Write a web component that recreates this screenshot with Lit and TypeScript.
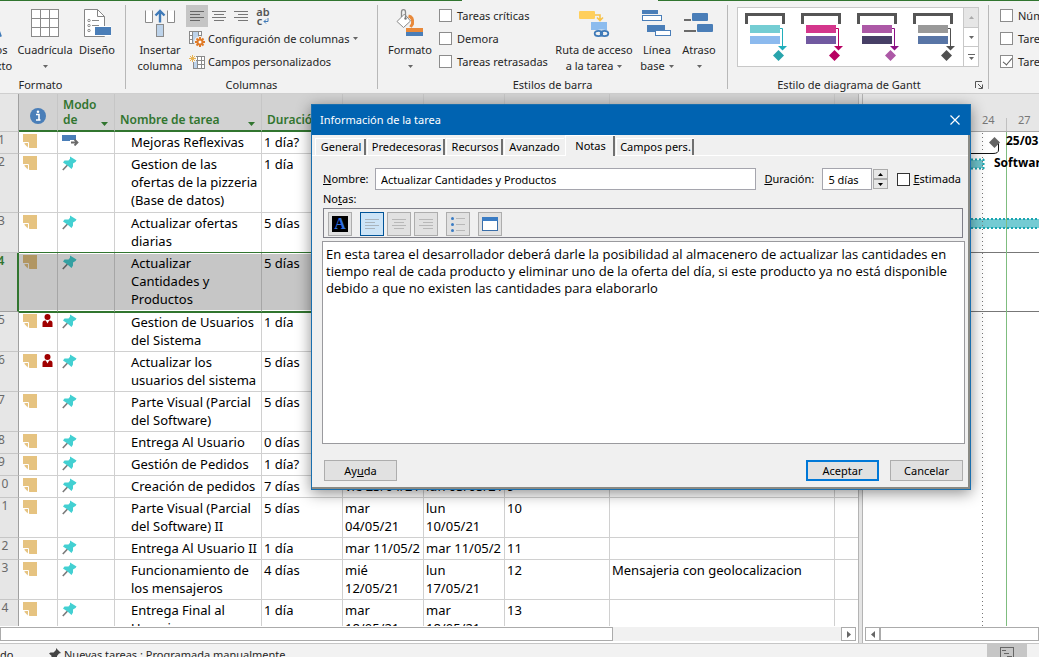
import { LitElement, html, svg, css, nothing, TemplateResult } from "lit";
import { customElement } from "lit/decorators.js";
import { classMap } from "lit/directives/class-map.js";

interface Task {
  n: number;
  name: string[];
  dur: string;
  start?: string[];
  end?: string[];
  pred?: string;
  res?: string;
  person?: boolean;
  auto?: boolean;
  selected?: boolean;
}

const TASKS: Task[] = [
  { n: 1, name: ["Mejoras Reflexivas"], dur: "1 día?", auto: true },
  { n: 2, name: ["Gestion de las", "ofertas de la pizzeria", "(Base de datos)"], dur: "1 día" },
  { n: 3, name: ["Actualizar ofertas", "diarias"], dur: "5 días" },
  { n: 4, name: ["Actualizar", "Cantidades y", "Productos"], dur: "5 días", selected: true },
  { n: 5, name: ["Gestion de Usuarios", "del Sistema"], dur: "1 día", person: true },
  { n: 6, name: ["Actualizar los", "usuarios del sistema"], dur: "5 días", person: true },
  { n: 7, name: ["Parte Visual (Parcial", "del Software)"], dur: "5 días" },
  { n: 8, name: ["Entrega Al Usuario"], dur: "0 días" },
  { n: 9, name: ["Gestión de Pedidos"], dur: "1 día?" },
  { n: 10, name: ["Creación de pedidos"], dur: "7 días", start: ["vie 23/04/21"], end: ["lun 03/05/21"], pred: "9" },
  { n: 11, name: ["Parte Visual (Parcial", "del Software) II"], dur: "5 días", start: ["mar", "04/05/21"], end: ["lun", "10/05/21"], pred: "10" },
  { n: 12, name: ["Entrega Al Usuario II"], dur: "1 día", start: ["mar 11/05/21"], end: ["mar 11/05/21"], pred: "11" },
  { n: 13, name: ["Funcionamiento de", "los mensajeros"], dur: "4 días", start: ["mié", "12/05/21"], end: ["lun", "17/05/21"], pred: "12", res: "Mensajeria con geolocalizacion" },
  { n: 14, name: ["Entrega Final al", "Usuario"], dur: "1 día", start: ["mar", "18/05/21"], end: ["mar", "18/05/21"], pred: "13" },
];

const lines = (parts?: string[]) =>
  parts ? parts.map((p, i) => (i ? html`<br>${p}` : p)) : nothing;

const icon = (w: number, h: number, body: TemplateResult | TemplateResult[]) =>
  html`<svg class="ico" width=${w} height=${h} viewBox="0 0 ${w} ${h}" fill="none" aria-hidden="true">${body}</svg>`;

const caret = () => icon(5, 3, svg`<path d="M0 0h5L2.500 3z" fill="#666"/>`);

const pin = () =>
  icon(15, 15, svg`<path d="M5.500 9L0.800 14" stroke="#7a7a7a" stroke-width="1.600"/><path d="M8 .5L14.500 4.500L13.500 6L11 7.500V10.500L9.500 13L5.500 9.500L1 6.500L2.500 4.500L6.500 4.500L8 2.800Z" fill="#43d0d2"/>`);
const note = () =>
  icon(14, 14, svg`<path d="M0 0H14V14H6.500L0 7.500Z" fill="#e6c380"/><path d="M0 8.500H5.500V14" stroke="#fff"/><path d="M1 9.500H4.800V13.500Z" fill="#e6c380"/>`);
const person = () =>
  icon(11, 13, svg`<circle cx="5.500" cy="3" r="3" fill="#a00000"/><path d="M0.500 13V9Q0.500 6.500 3 6.500H3.800L5.500 9.500L7.200 6.500H8Q10.500 6.500 10.500 9V13Z" fill="#a00000"/>`);
const auto = () =>
  icon(17, 12, svg`<rect y="1" width="14" height="6" fill="#4a7eb8"/><path d="M8 6h6v5h-6z" fill="#fff"/><path d="M9 8.500H15M12.500 5.500L15.500 8.500L12.500 11.500" stroke="#6a6a6a" stroke-width="1.800"/>`);

const alignLines = (kind: "l" | "c" | "r", w: number, color: string, step: number) => {
  const short = Math.round(w * 0.68);
  const x = kind === "l" ? 0 : kind === "c" ? Math.round((w - short) / 2) : w - short;
  return icon(w, step * 3 + 1, svg`${[0, 1, 2, 3].map(
    (i) => svg`<rect x=${i % 2 ? x : 0} y=${i * step} width=${i % 2 ? short : w} height="1" fill=${color}/>`,
  )}`);
};

const icons = {
  letter: () => icon(28, 30, svg`<path d="M5 29L14 4L23 29M8 21H20" stroke="#3f7ab8" stroke-width="4"/>`),
  grid: () => icon(28, 28, svg`<rect x=".5" y=".5" width="27" height="27" fill="#fff" stroke="#8a8a8a"/><path d="M9.500 0V28M18.500 0V28M0 9.500H28M0 18.500H28" stroke="#8a8a8a"/>`),
  design: () => icon(28, 28, svg`<path d="M1.500 .5H14.500L21.500 7.500V27.500H1.500Z" fill="#fff" stroke="#858585"/><path d="M14.500 .5V7.500H21.500" stroke="#858585"/><circle cx="6" cy="11.500" r="1.200" stroke="#8a8a8a"/><circle cx="6" cy="16.500" r="1.200" stroke="#8a8a8a"/><circle cx="6" cy="21.500" r="1.200" stroke="#8a8a8a"/><path d="M9 11.500H16M9 16.500H16" stroke="#8a8a8a"/><rect x="11" y="17" width="17" height="10" fill="#fff"/><rect x="12" y="18" width="16" height="8" fill="#4a7eb8"/>`),
  insert: () => icon(30, 28, svg`<path d="M.5 1.500V13.500H7.500V1.500M22.500 1.500V13.500H29.500V1.500" fill="#fff" stroke="#8a8a8a"/><rect x="11.500" y="15.500" width="7" height="12" fill="#bdd3ea" stroke="#8a8a8a"/><path d="M15 13.500V2M10.500 6.500L15 2L19.500 6.500" stroke="#3f7ab8" stroke-width="2.400"/>`),
  wrapArrow: () => icon(6, 6, svg`<path d="M5 0V3.500H1M3 1.500L1 3.500L3 5.500" stroke="#3f7ab8"/>`),
  config: () => icon(16, 16, svg`<rect x=".5" y=".5" width="12" height="12" fill="#fff" stroke="#8a8a8a"/><path d="M3.500 0V13M9.500 0V13M0 4.500H13M0 8.500H13" stroke="#8a8a8a"/><rect x="4" y="1" width="5" height="11" fill="#bdd3ea"/><circle cx="11" cy="11" r="6" fill="#f2f2f2"/><path d="M11 6V16M6 11H16M7.500 7.500L14.500 14.500M14.500 7.500L7.500 14.500" stroke="#e07b28" stroke-width="2"/><circle cx="11" cy="11" r="2.500" fill="#fff" stroke="#e07b28" stroke-width="2"/>`),
  fields: () => icon(16, 14, svg`<rect x="4.500" y="1.500" width="11" height="12" fill="#fff" stroke="#8a8a8a"/><path d="M8.500 1V14M12.500 1V14M4 5.500H16M4 9.500H16" stroke="#8a8a8a"/><rect x="5" y="6" width="3" height="7" fill="#bdd3ea"/><rect width="7" height="7" fill="#f2f2f2"/><path d="M3.500 0V7M0 3.500H7M1 1L6 6M6 1L1 6" stroke="#e8b455"/>`),
  bucket: () => icon(28, 28, svg`<path d="M12.500 7Q17.500 8 16.500 15L14.500 18" stroke="#e8893a" stroke-width="3"/><path d="M1 12.500L8.500 5L14.500 12L7.500 18.500Z" fill="#fff" stroke="#8a8a8a"/><path d="M5.500 8V3Q5.500 .7 7.500 .7Q9.500 .7 9.500 3V9" stroke="#8a8a8a" stroke-width="1.300"/><circle cx="9.500" cy="9.500" r="1.200" fill="#777"/><rect x="10" y="19" width="17" height="4" fill="#e8893a"/><rect x="10" y="23" width="17" height="4" fill="#4a7eb8"/>`),
  path: () => icon(32, 28, svg`<rect x="1" y="2" width="16" height="8" rx="1" fill="#ffcf5c"/><path d="M17 6H22V11M19 8.500L22 11.500L25 8.500" stroke="#f7c24a" stroke-width="1.600"/><rect x="13" y="13" width="16" height="8" fill="#8cbcee"/><ellipse cx="23.500" cy="24.500" rx="7.500" ry="4" fill="#f2f2f2"/><ellipse cx="20.500" cy="24.500" rx="3.800" ry="2.600" stroke="#3f7ab8" stroke-width="1.800"/><ellipse cx="26.500" cy="24.500" rx="3.800" ry="2.600" stroke="#3f7ab8" stroke-width="1.800"/>`),
  baseline: () => icon(30, 27, svg`<rect x="0" y="0" width="16" height="4" fill="#4a7eb8"/><rect x=".5" y="5.500" width="19" height="5" fill="#fff" stroke="#4a7eb8"/><rect x="5" y="15" width="18" height="7" fill="#4a7eb8"/><rect x="13.500" y="20.500" width="15" height="5" fill="#fff" stroke="#4a7eb8"/>`),
  slack: () => icon(30, 21, svg`<rect x="8" y="0" width="16" height="8" rx="1" fill="#4a7eb8"/><rect x="13" y="11" width="16" height="8" rx="1" fill="#4a7eb8"/><path d="M0 7H7M0 18H12" stroke="#6a6a6a" stroke-width="2"/>`),
};

const ganttStyle = (a: string, b: string, line: string, dia: string) =>
  icon(44, 48, svg`<path d="M1.500 11V1.500H38.500V11" stroke="#555" stroke-width="3"/><rect x="5" y="12" width="30" height="8" fill=${a}/><rect x="5" y="23" width="30" height="8" fill=${b}/><path d="M35 15.500H37.500V34" stroke=${line}/><path d="M33 33H42L37.500 37.500Z" fill=${line}/><path d="M33.500 37L39 42.500L33.500 48L28 42.500Z" fill=${dia}/>`);

@customElement("app-root")
export class AppRoot extends LitElement {
  static styles = css`
    :host { display: flex; flex-direction: column; height: 100vh; overflow: hidden; position: relative;
      background: #fff; color: #262626; font: 11px/16px "Noto Sans", "Open Sans", sans-serif; }
    * { box-sizing: border-box; }
    button, input, textarea { font: inherit; color: inherit; margin: 0; padding: 0; border: 0; border-radius: 0; background: none; }
    svg { display: block; flex: none; }
    input[type="checkbox"] { appearance: none; width: 13px; height: 13px; border: 1px solid #8c8c8c; background: #fff; flex: none; }
    input[type="checkbox"]:checked::before { content: ""; display: block; width: 4px; height: 8px; margin: 0 0 0 4px;
      border: solid #5a5a5a; border-width: 0 1px 1px 0; transform: rotate(40deg); }

    .ribbon { display: flex; flex: none; height: 93px; padding-top: 5px; overflow: hidden;
      background: linear-gradient(90deg, #31752f 462px, #f2f2f2 462px 658px, #31752f 658px) top / 100% 1px no-repeat #f2f2f2; }
    .group { display: flex; flex-direction: column; flex: none; height: 84px; border-right: 1px solid #b8b8b8; }
    .g1 { width: 170px; margin-left: -44px; }
    .g2 { width: 252px; }
    .g3 { width: 350px; }
    .g4 { width: 261px; }
    .g5 { flex: 1 0 160px; border: 0; }
    .body { display: flex; flex: none; height: 71px; padding-left: 8px; }
    .g1 .body { padding-left: 13px; }
    .g4 .body { padding-left: 9px; }
    .g5 .body { padding-left: 6px; }
    .title { display: flex; flex: none; height: 17px; justify-content: center; line-height: 17px; }
    .title span { flex: 1; text-align: center; }
    .launch { width: 18px; display: flex; justify-content: center; align-items: center; }
    .big { display: flex; flex-direction: column; align-items: center; flex: none; padding-top: 2px; white-space: nowrap; }
    .big .pic { height: 32px; display: flex; align-items: center; margin-bottom: 3px; }
    .big .line { display: flex; align-items: center; gap: 4px; height: 16px; }
    .w38 { width: 38px; } .w40 { width: 40px; } .w44 { width: 44px; } .w46 { width: 46px; }
    .w48 { width: 48px; } .w52 { width: 52px; } .w64 { width: 64px; } .w88 { width: 88px; }
    .tools { display: flex; flex-direction: column; }
    .aligns { display: flex; height: 22px; }
    .aligns button { width: 22px; display: flex; justify-content: center; align-items: center; }
    .aligns .on { background: #c5c5c5; }
    .aligns .wraptext { flex-direction: column; line-height: 9px; font-weight: 600; color: #555; }
    .wraptext span { display: flex; align-items: center; gap: 1px; }
    .small { display: flex; align-items: center; gap: 3px; height: 23px; padding-left: 3px; white-space: nowrap; }
    .small .caret { padding-left: 1px; }
    .checks { display: flex; flex-direction: column; width: 116px; margin-top: -1px; padding-left: 5px; }
    .checks label { display: flex; align-items: center; gap: 5px; height: 23px; white-space: nowrap; }
    .gallery { display: flex; height: 60px; margin-top: 2px; border: 1px solid #c8c8c8; background: #fff; }
    .gallery .items { display: flex; width: 225px; padding: 5px 0 0 7px; gap: 12px; }
    .gallery .items button { display: flex; align-items: flex-start; }
    .gscroll { display: flex; flex-direction: column; border-left: 1px solid #c8c8c8; }
    .gscroll button { flex: 1; width: 14px; display: flex; align-items: center; justify-content: center; border-bottom: 1px solid #c8c8c8; }
    .gscroll button:first-child { background: #e6e6e6; }
    .gscroll button:last-child { border: 0; }

    .main { display: flex; flex: 1; min-height: 0; border-top: 1px solid #cfcfcf; }
    .pane { display: flex; flex-direction: column; flex: none; width: 859px; overflow: hidden; border-right: 1px solid #b4b4b4; }
    .sheet { flex: 1; min-height: 0; overflow: hidden; }
    table { table-layout: fixed; width: 876px; margin-left: -17px; border-collapse: separate; border-spacing: 0; }
    th { height: 38px; padding: 0 3px 3px 5px; text-align: left; vertical-align: bottom; background: #d2d2d2; color: #31752f;
      font-size: 12px; line-height: 15px; font-weight: 600; white-space: nowrap; overflow: hidden;
      border-right: 1px solid #c6c6c6; border-bottom: 2px solid #31752f; }
    th:first-child { background: #e6e6e6; border-bottom: 1px solid #c6c6c6; border-right-color: #a0a0a0; }
    .head { display: flex; justify-content: space-between; align-items: flex-end; gap: 4px; }
    .head svg { margin: 0 3px 1px 0; }
    .info { display: flex; justify-content: center; padding: 0 3px 3px 0; }
    td { padding: 1px 3px 2px 2px; height: 22px; vertical-align: top; overflow: hidden; white-space: nowrap; color: #000;
      font-size: 13px; line-height: 18px; border-right: 1px solid #d0d0d0; border-bottom: 1px solid #d0d0d0; }
    .tall td { height: 59px; }
    td.num { background: #e6e6e6; color: #6a6a6a; text-align: center; font-size: 12px; border-right-color: #a0a0a0; border-bottom-color: #c6c6c6; line-height: 16px; padding: 0 0 0 2px; }
    td.name { padding-left: 16px; }
    .clip { overflow: hidden; }
    td .marks { display: flex; gap: 5px; padding: 1px 0 0 2px; }
    td .mode { display: flex; padding: 1px 0 0 2px; }
    .sel td { position: relative; background: #c6c6c6; border-right-color: #a6a6a6; border-bottom-color: #31752f;
      box-shadow: inset 0 1px #fff, inset 0 -1px #fff, 0 -1px #31752f, 0 1px #31752f; }
    .sel .ico { filter: brightness(.77); }
    .sel td.num { background: #d2d2d2; color: #31752f; font-weight: 600; box-shadow: none; border-right: 2px solid #31752f; border-bottom-color: #a0a0a0; }
    .hscroll { display: flex; flex: none; height: 17px; padding: 1px 2px 2px 0; background: #fff; }
    .track { display: flex; flex: 1; background: #f1f1f1; }
    .thumb { border: 1px solid #ababab; background: #fff; height: 14px; }
    .left { width: 613px; }
    .full { flex: 1; }
    .arrow { width: 15px; height: 14px; border: 1px solid #ababab; background: #fff; display: flex; align-items: center; justify-content: center; }
    .split { flex: none; width: 4px; background: #e4e4e4; border-right: 1px solid #b4b4b4; }
    .chart { display: flex; flex-direction: column; flex: 1; min-width: 0; overflow: hidden; }
    .scale { flex: none; height: 38px; background: #e6e6e6; border-bottom: 1px solid #a8a8a8; }
    .canvas { flex: 1; min-height: 0; overflow: hidden; }
    .chart text { font-family: "Noto Sans", sans-serif; font-size: 11px; }
    .chart .b { font-weight: 700; fill: #000; font-size: 12px; }
    .chart .hscroll { padding-left: 2px; padding-right: 0; }

    .status { flex: none; display: flex; height: 14px; overflow: hidden; background: #f2f2f2; border-top: 1px solid #c6c6c6; }
    .status span { flex: none; height: 22px; line-height: 22px; }
    .status .first { width: 48px; }
    .status .pinned { display: flex; align-items: flex-start; gap: 3px; flex: 1; }
    .status .pinned svg { margin-top: 4px; }
    .status .view { width: 40px; background: #c6c6c6; display: flex; justify-content: center; padding-top: 3px; margin-right: 12px; }

    .dialog { position: absolute; left: 311px; top: 104px; width: 660px; height: 386px; display: flex; flex-direction: column;
      border: 1px solid #1a6fae; background: #f0f0f0; color: #000; box-shadow: 0 3px 14px rgba(0,0,0,.45), inset -2px -2px #8a8a84; }
    .bar { flex: none; display: flex; align-items: center; justify-content: space-between; height: 30px; padding: 0 10px 0 8px; background: #0063b1; color: #fff; }
    .bar h1 { margin: 0; font: inherit; }
    .tabs { flex: none; display: grid; grid-template-columns: 51px 78px 57px 60px 50px 78px; column-gap: 1px; align-items: end; height: 21px; padding-left: 3px;
      border-bottom: 1px solid #fff; margin-right: 2px; }
    .tabs button { height: 17px; line-height: 16px; border: solid #fff; border-width: 1px 0 0 1px; box-shadow: inset -2px 0 #707070; white-space: nowrap; text-align: center; }
    .tabs button.flat { box-shadow: none; }
    .tabs button.on { height: 21px; line-height: 19px; margin-bottom: -1px; background: #f0f0f0; padding-bottom: 2px; }
    .form { display: flex; flex-direction: column; flex: 1; min-height: 0; padding: 12px 5px 8px 10px; }
    .row { display: flex; align-items: center; height: 22px; padding-left: 1px; }
    .row .nl { width: 52px; }
    .row input:not([type]) { height: 22px; padding: 0 5px; border: 1px solid #a5a5ad; background: #fff; }
    .row .nm { flex: 1; min-width: 0; }
    .row .dl { width: 66px; padding-left: 8px; }
    .row .dur { width: 50px; }
    .spin { display: flex; flex-direction: column; width: 15px; margin: 0 9px 0 1px; }
    .spin button { height: 10px; border: 1px solid #ababab; background: #e6e6e6; display: flex; align-items: center; justify-content: center; }
    .est { display: flex; align-items: center; gap: 3px; padding-right: 4px; }
    .row .est input { border-color: #333; }
    .notes { line-height: 16px; padding: 1px 0 0 1px; height: 18px; }
    .bars { display: flex; flex: none; height: 30px; margin: 0 2px 3px 1px; padding: 3px 0 0 4px; border: 1px solid #7f7f88; }
    .bars button { width: 24px; height: 24px; display: flex; align-items: center; justify-content: center; border: 1px solid #adadad; background: #e1e1e1; margin-right: 3px; }
    .bars button.gap { margin-right: 8px; }
    .bars button.on { border-color: #005499; background: #cce4f7; }
    .afont { width: 16px; height: 16px; background: #000; color: #2f6fe0; font: 700 16px/16px "Liberation Serif", serif; text-align: center; }
    textarea { display: block; flex: 1; min-height: 0; width: 100%; resize: none; overflow: hidden; padding: 4px 3px; border: 1px solid #9a9a9e; background: #fff; color: #000;
      font: 13px/17px "Open Sans", "Noto Sans", sans-serif; outline: 0; }
    .foot { display: flex; flex: none; gap: 11px; margin: 16px 0 0 2px; padding-right: 2px; }
    .foot button { width: 73px; height: 21px; border: 1px solid #adadad; background: #e1e1e1; }
    .foot .help { margin-right: auto; }
    .foot .ok { border: 2px solid #0078d7; }
  `;

  private big(cls: string, pic: unknown, l1: string, l2: string, drop = false) {
    return html`<button class="big ${cls}">
      <span class="pic">${pic}</span><span class="line">${l1}</span>
      <span class="line">${l2}${drop ? caret() : nothing}</span>
    </button>`;
  }

  private check(label: string, on = false) {
    return html`<label><input type="checkbox" ?checked=${on}>${label}</label>`;
  }

  private ribbon() {
    return html`<header class="ribbon">
      <section class="group g1">
        <div class="body">
          ${this.big("w44", icons.letter(), "Estilos", "de texto")}
          ${this.big("w64", icons.grid(), "Cuadrícula", "", true)}
          ${this.big("w40", icons.design(), "Diseño", "")}
        </div>
        <div class="title"><span>Formato</span></div>
      </section>
      <section class="group g2">
        <div class="body">
          ${this.big("w52", icons.insert(), "Insertar", "columna")}
          <div class="tools">
            <div class="aligns">
              <button class="on" aria-label="Izquierda">${alignLines("l", 14, "#666", 3)}</button>
              <button aria-label="Centro">${alignLines("c", 14, "#777", 3)}</button>
              <button aria-label="Derecha">${alignLines("r", 14, "#777", 3)}</button>
              <button class="wraptext" aria-label="Ajustar texto"><span>ab</span><span>c${icons.wrapArrow()}</span></button>
            </div>
            <button class="small">${icons.config()}Configuración de columnas<span class="caret">${caret()}</span></button>
            <button class="small">${icons.fields()}Campos personalizados</button>
          </div>
        </div>
        <div class="title"><span>Columnas</span></div>
      </section>
      <section class="group g3">
        <div class="body">
          ${this.big("w48", icons.bucket(), "Formato", "", true)}
          <div class="checks">
            ${this.check("Tareas críticas")}${this.check("Demora")}${this.check("Tareas retrasadas")}
          </div>
          ${this.big("w88", icons.path(), "Ruta de acceso", "a la tarea", true)}
          ${this.big("w38", icons.baseline(), "Línea", "base", true)}
          ${this.big("w46", icons.slack(), "Atraso", "", true)}
        </div>
        <div class="title"><span>Estilos de barra</span></div>
      </section>
      <section class="group g4">
        <div class="body">
          <div class="gallery">
            <div class="items">
              <button aria-label="Estilo 1">${ganttStyle("#74cdd3", "#8cbaee", "#20aebb", "#28a4ac")}</button>
              <button aria-label="Estilo 2">${ganttStyle("#d4368c", "#7159a0", "#b80062", "#b80062")}</button>
              <button aria-label="Estilo 3">${ganttStyle("#ac58a6", "#473f66", "#8a0f84", "#ac58a6")}</button>
              <button aria-label="Estilo 4">${ganttStyle("#999", "#5875a6", "#505050", "#505050")}</button>
            </div>
            <div class="gscroll">
              <button aria-label="Subir">${icon(5, 3, svg`<path d="M0 3H5L2.500 0Z" fill="#aaa"/>`)}</button>
              <button aria-label="Bajar">${caret()}</button>
              <button aria-label="Más">${icon(7, 6, svg`<path d="M0 .5H7" stroke="#666"/><path d="M1 3H6L3.500 6Z" fill="#666"/>`)}</button>
            </div>
          </div>
        </div>
        <div class="title"><span>Estilo de diagrama de Gantt</span>
          <button class="launch" aria-label="Opciones">${icon(8, 8, svg`<path d="M.5 7V.5H7M3 3L7 7M7.500 3.500V7.500H3.500" stroke="#555"/>`)}</button>
        </div>
      </section>
      <section class="group g5">
        <div class="body"><div class="checks">
          ${this.check("Número de esquema")}${this.check("Tarea de resumen del proyecto")}${this.check("Tareas de resumen", true)}
        </div></div>
      </section>
    </header>`;
  }

  private sheet() {
    const drop = () => icon(7, 4, svg`<path d="M0 0H7L3.500 4Z" fill="#31752f"/>`);
    return html`<div class="sheet"><table>
      <colgroup>${[36, 39, 57, 147, 81, 81, 81, 105, 225, 24].map((w) => html`<col style="width:${w}px">`)}</colgroup>
      <thead><tr>
        <th></th>
        <th><div class="info">${icon(16, 16, svg`<circle cx="8" cy="8" r="8" fill="#4a7eb8"/><circle cx="8" cy="3.800" r="1.300" fill="#fff"/><path d="M6 6.500H9V12M6 12H10.500" stroke="#fff" stroke-width="1.600"/>`)}</div></th>
        <th><div class="head"><span>Modo<br>de</span>${drop()}</div></th>
        <th><div class="head"><span>Nombre de tarea</span>${drop()}</div></th>
        <th>Duración</th><th></th><th></th><th></th><th></th><th></th>
      </tr></thead>
      <tbody>${TASKS.map((t) => html`<tr class=${classMap({ sel: !!t.selected, tall: t.name.length === 3 })}>
        <td class="num">${t.n}</td>
        <td><div class="marks">${note()}${t.person ? person() : nothing}</div></td>
        <td><div class="mode">${t.auto ? auto() : pin()}</div></td>
        <td class="name">${lines(t.name)}</td>
        <td>${t.dur}</td>
        <td><div class="clip">${lines(t.start)}</div></td>
        <td><div class="clip">${lines(t.end)}</div></td>
        <td>${t.pred ?? nothing}</td>
        <td>${t.res ?? nothing}</td>
        <td></td>
      </tr>`)}</tbody>
    </table></div>`;
  }

  private chart() {
    return html`<div class="chart">
      <svg class="scale" width="100%" height="38">
        <path d="M143.500 24V38" stroke="#c0c0c0"/>
        <text x="119" y="30" fill="#777">24</text><text x="155" y="30" fill="#777">27</text>
      </svg>
      <svg class="canvas" width="100%">
        <path d="M0 120.500H400M0 179.500H400" stroke="#777"/>
        <rect x="60" y="28" width="60" height="8" fill="#6fc5cc"/>
        <path d="M60 27.500H121M60 36.500H121M120.500 27V37" stroke="#1ba5b0" stroke-width="2" stroke-dasharray="2 2"/>
        <rect x="60" y="87" width="340" height="9" fill="#74cbd3"/>
        <path d="M60 87H400M60 96H400" stroke="#1ba5b0" stroke-width="2" stroke-dasharray="2 2"/>
        <path d="M119.500 1V600" stroke="#777" stroke-dasharray="1 3"/>
        <path d="M60 21.500H130Q135.500 21.500 135.500 18V10H131" stroke="#111" fill="none"/>
        <path d="M131.500 5L137 10.500L131.500 16L126 10.500Z" fill="#666"/>
        <path d="M143.500 0V600" stroke="#7fbd7f"/>
        <text class="b" x="143" y="13">25/03</text>
        <text class="b" x="131" y="35">Software</text>
      </svg>
      <div class="hscroll">
        <button class="arrow" aria-label="Izquierda">${icon(4, 7, svg`<path d="M4 0V7L0 3.500Z" fill="#666"/>`)}</button>
        <div class="track"><div class="thumb full"></div></div>
      </div>
    </div>`;
  }

  private dialog() {
    const arrow = (up: boolean) => icon(5, 3, svg`<path d=${up ? "M0 3H5L2.500 0Z" : "M0 0H5L2.500 3Z"} fill="#000"/>`);
    return html`<section class="dialog" role="dialog" aria-labelledby="dlg">
      <div class="bar"><h1 id="dlg">Información de la tarea</h1>
        <button aria-label="Cerrar">${icon(10, 10, svg`<path d="M.5 .5L9.500 9.500M9.500 .5L.5 9.500" stroke="#fff" stroke-width="1.200"/>`)}</button></div>
      <div class="tabs" role="tablist">
        <button role="tab">General</button><button role="tab">Predecesoras</button><button role="tab">Recursos</button>
        <button role="tab" class="flat">Avanzado</button><button role="tab" class="on" aria-selected="true">Notas</button>
        <button role="tab">Campos pers.</button>
      </div>
      <div class="form">
        <div class="row">
          <label class="nl" for="nm"><u>N</u>ombre:</label><input id="nm" class="nm" .value=${"Actualizar Cantidades y Productos"}>
          <label class="dl" for="du"><u>D</u>uración:</label><input id="du" class="dur" .value=${"5 días"}>
          <div class="spin"><button aria-label="Más">${arrow(true)}</button><button aria-label="Menos">${arrow(false)}</button></div>
          <label class="est"><input type="checkbox"><span><u>E</u>stimada</span></label>
        </div>
        <label class="notes" for="nt">No<u>t</u>as:</label>
        <div class="bars">
          <button class="gap" aria-label="Fuente"><span class="afont">A</span></button>
          <button class="on" aria-label="Izquierda">${alignLines("l", 14, "#a9b4bd", 3)}</button>
          <button aria-label="Centro">${alignLines("c", 14, "#b8b8b8", 3)}</button>
          <button class="gap" aria-label="Derecha">${alignLines("r", 14, "#b8b8b8", 3)}</button>
          <button class="gap" aria-label="Viñetas">${icon(14, 15, svg`${[1.5, 7.5, 13.5].map((y) => svg`<circle cx="1.500" cy=${y} r="1.500" fill="#3a7cc4"/><path d="M5 ${y}H14" stroke="#b8b8b8"/>`)}`)}</button>
          <button aria-label="Objeto">${icon(16, 14, svg`<rect x=".5" y=".5" width="15" height="13" fill="#fff" stroke="#3a6ea8"/><rect width="16" height="4" fill="#3a7cc4"/>`)}</button>
        </div>
        <textarea id="nt" .value=${"En esta tarea el desarrollador deberá darle la posibilidad al almacenero de actualizar las cantidades en tiempo real de cada producto y eliminar uno de la oferta del día, si este producto ya no está disponible debido a que no existen las cantidades para elaborarlo"}></textarea>
        <div class="foot">
          <button class="help">Ay<u>u</u>da</button><button class="ok">Aceptar</button><button>Cancelar</button>
        </div>
      </div>
    </section>`;
  }

  render() {
    return html`${this.ribbon()}
      <main class="main">
        <div class="pane">${this.sheet()}
          <div class="hscroll"><div class="track"><div class="thumb left"></div></div>
            <button class="arrow" aria-label="Derecha">${icon(4, 7, svg`<path d="M0 0V7L4 3.500Z" fill="#666"/>`)}</button></div>
        </div>
        <div class="split"></div>
        ${this.chart()}
      </main>
      <footer class="status">
        <span class="first">do</span>
        <span class="pinned">${icon(13, 13, svg`<path d="M5 8L0 13" stroke="#444" stroke-width="1.400"/><path d="M8 0L13 5L11 5.500L9 8L9 11L8 12L1 5.500L2.500 4.500L5.500 4.500L8 2Z" fill="#444"/>`)}Nuevas tareas : Programada manualmente</span>
        <div class="view">${icon(14, 12, svg`<rect x=".5" y=".5" width="13" height="11" stroke="#666"/><path d="M2 3.500H6M4 6.500H9M7 9.500H12" stroke="#666"/>`)}</div>
      </footer>
      ${this.dialog()}`;
  }
}
